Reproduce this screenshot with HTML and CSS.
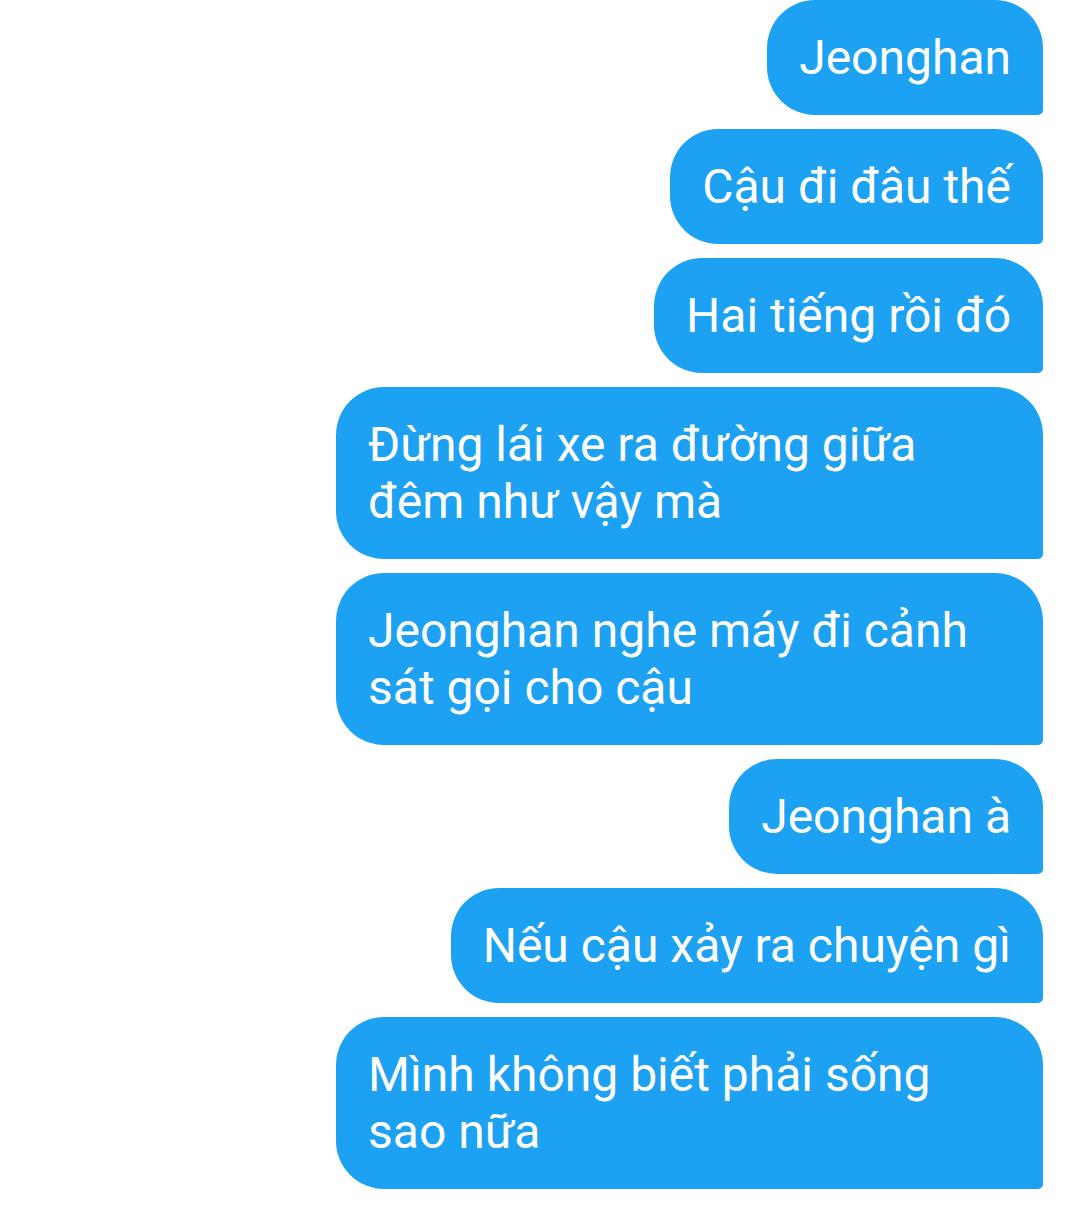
FILE: index.html
```html
<!DOCTYPE html>
<html lang="vi">
<head>
<meta charset="utf-8">
<link rel="stylesheet" href="styles.css">
</head>
<body>
<div class="chat">
  <div class="bubble">Jeonghan</div>
  <div class="bubble">Cậu đi đâu thế</div>
  <div class="bubble">Hai tiếng rồi đó</div>
  <div class="bubble">Đừng lái xe ra đường giữa đêm như vậy mà</div>
  <div class="bubble">Jeonghan nghe máy đi cảnh sát gọi cho cậu</div>
  <div class="bubble">Jeonghan à</div>
  <div class="bubble">Nếu cậu xảy ra chuyện gì</div>
  <div class="bubble">Mình không biết phải sống sao nữa</div>
</div>
</body>
</html>
```
FILE: styles.css
```css
html, body {
  margin: 0;
  padding: 0;
  background: #ffffff;
}
.chat {
  display: flex;
  flex-direction: column;
  align-items: flex-end;
  gap: 14px;
  padding: 0 35px 0 0;
}
.bubble {
  box-sizing: border-box;
  max-width: 707px;
  background: #1da1f2;
  color: #ffffff;
  font-family: Roboto, "Noto Sans", sans-serif;
  font-size: 48px;
  line-height: 57px;
  padding: 29px 32px;
  border-radius: 48px 48px 5px 48px;
}
```
